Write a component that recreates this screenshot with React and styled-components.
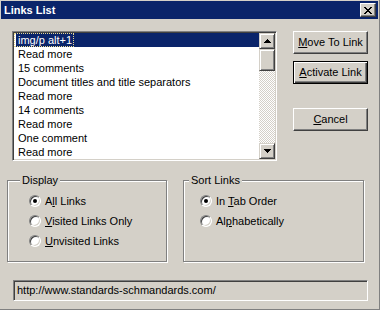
import React from "react"
import styled, { createGlobalStyle } from "styled-components"

const GlobalStyle = createGlobalStyle`
	html, body {
		margin: 0;
		padding: 0;
		background: #d4d0c8;
	}
	body {
		font-family: "Liberation Sans", Arial, sans-serif;
		font-size: 11px;
		color: #000;
	}
`

const Window = styled.div`
	width: 380px;
	height: 310px;
	box-sizing: border-box;
	padding: 1px 1px 0 1px;
	background: #d4d0c8;
	border-right: 1px solid #808080;
	border-bottom: 1px solid #808080;
	display: flex;
	flex-direction: column;
`

const TitleBar = styled.div`
	height: 18px;
	background: #0a246a;
	display: flex;
	align-items: center;
	justify-content: space-between;
	padding: 0 2px 0 3px;
`

const Title = styled.span`
	color: #fff;
	font-weight: bold;
	font-size: 11px;
	line-height: 18px;
`

const CloseButton = styled.div`
	width: 16px;
	height: 14px;
	box-sizing: border-box;
	background: #d4d0c8;
	border: 1px solid;
	border-color: #fff #404040 #404040 #fff;
	box-shadow: inset -1px -1px 0 #808080;
	display: flex;
	align-items: center;
	justify-content: center;

	svg {
		display: block;
	}
`

const Body = styled.div`
	display: flex;
	flex-direction: column;
`

const TopRow = styled.div`
	display: flex;
	align-items: flex-start;
	margin: 12px 0 0 11px;
`

const ListBox = styled.div`
	width: 265px;
	height: 130px;
	box-sizing: border-box;
	border: 1px solid;
	border-color: #808080 #fff #fff #808080;
	box-shadow: inset 1px 1px 0 #404040, inset -1px -1px 0 #d4d0c8;
	background: #fff;
	padding: 1px;
	display: flex;
`

const Items = styled.ul`
	flex: 1;
	list-style: none;
	margin: 0;
	padding: 0 0 0 2px;
	overflow: hidden;
`

const Item = styled.li`
	height: 14px;
	line-height: 14px;
	padding-left: 1px;
	background: ${(p) => (p.$selected ? "#0a246a" : "transparent")};
	color: ${(p) => (p.$selected ? "#fff" : "#000")};
	white-space: nowrap;
`

const ItemText = styled.span`
	display: inline-block;
	height: 14px;
	box-sizing: border-box;
	padding: 0 1px;
	border: 1px dotted ${(p) => (p.$focus ? "#e8d890" : "transparent")};
	line-height: 12px;
	margin-left: -3px;
	padding-left: 3px;
`

const ScrollBar = styled.div`
	width: 16px;
	display: flex;
	flex-direction: column;
`

const ScrollButton = styled.div`
	width: 16px;
	height: 16px;
	box-sizing: border-box;
	background: #d4d0c8;
	border: 1px solid;
	border-color: #d4d0c8 #404040 #404040 #d4d0c8;
	box-shadow: inset 1px 1px 0 #fff, inset -1px -1px 0 #808080;
	display: flex;
	align-items: center;
	justify-content: center;

	svg {
		display: block;
	}
`

const Thumb = styled(ScrollButton)`
	height: 22px;
`

const Track = styled.div`
	flex: 1;
	background: repeating-conic-gradient(#fff 0 25%, #d4d0c8 0 50%) 0 0 / 2px 2px;
`

const ButtonColumn = styled.div`
	display: flex;
	flex-direction: column;
	margin-left: 16px;
`

const Button = styled.div`
	width: 75px;
	height: 23px;
	box-sizing: border-box;
	margin-top: ${(p) => p.$gap || 0}px;
	background: #d4d0c8;
	border: 1px solid;
	border-color: ${(p) =>
		p.$default ? "#000" : "#fff #404040 #404040 #fff"};
	box-shadow: ${(p) =>
		p.$default
			? "inset 1px 1px 0 #fff, inset -1px -1px 0 #404040, inset -2px -2px 0 #808080"
			: "inset -1px -1px 0 #808080, inset 1px 1px 0 #d4d0c8"};
	display: flex;
	align-items: center;
	justify-content: center;
	line-height: 13px;
	padding-bottom: 1px;
`

const GroupRow = styled.div`
	display: flex;
	gap: 16px;
	margin: 13px 0 0 6px;
`

const Group = styled.fieldset`
	width: ${(p) => p.$width}px;
	height: 88px;
	box-sizing: border-box;
	margin: 0;
	padding: 0;
	border: 1px solid #808080;
	box-shadow: inset 1px 1px 0 #fff, 1px 1px 0 #fff;
	min-width: 0;
`

const Legend = styled.legend`
	margin-left: ${(p) => p.$offset}px;
	padding: 0 2px;
	line-height: 13px;
	background: #d4d0c8;
`

const RadioList = styled.div`
	display: flex;
	flex-direction: column;
	padding: 4px 0 0 ${(p) => p.$inset}px;
`

const RadioRow = styled.label`
	display: flex;
	align-items: center;
	height: 20px;
	gap: 4px;
`

const RadioCircle = styled.span`
	width: 12px;
	height: 12px;
	box-sizing: border-box;
	border-radius: 50%;
	border: 1px solid;
	border-color: #808080 #fff #fff #808080;
	box-shadow: inset 1px 1px 0 #404040, inset -1px -1px 0 #d4d0c8;
	background: #fff;
	display: flex;
	align-items: center;
	justify-content: center;

	&::after {
		content: "";
		width: 4px;
		height: 4px;
		border-radius: 50%;
		background: ${(p) => (p.$checked ? "#000" : "transparent")};
	}
`

const Status = styled.div`
	width: 355px;
	height: 21px;
	box-sizing: border-box;
	margin: 18px 0 0 12px;
	border: 1px solid;
	border-color: #808080 #fff #fff #808080;
	box-shadow: inset 1px 1px 0 #404040, inset -1px -1px 0 #d4d0c8;
	padding: 0 3px;
	display: flex;
	align-items: center;
	line-height: 13px;
`

const links = [
	"img/p alt+1",
	"Read more",
	"15 comments",
	"Document titles and title separators",
	"Read more",
	"14 comments",
	"Read more",
	"One comment",
	"Read more",
]

const Arrow = ({ up }) => (
	<svg width="7" height="4" viewBox="0 0 7 4" shapeRendering="crispEdges">
		<polygon
			points={up ? "3.5,0 7,4 0,4" : "0,0 7,0 3.5,4"}
			fill="#000"
		/>
	</svg>
)

const Radio = ({ checked, children }) => (
	<RadioRow>
		<RadioCircle $checked={checked} />
		<span>{children}</span>
	</RadioRow>
)

const App = () => {
	return (
		<>
			<GlobalStyle />
			<Window>
				<TitleBar>
					<Title>Links List</Title>
					<CloseButton>
						<svg width="8" height="7" viewBox="0 0 8 7" shapeRendering="crispEdges">
							<path d="M0.5 0 L7.5 7 M7.5 0 L0.5 7" stroke="#000" strokeWidth="1.6" />
						</svg>
					</CloseButton>
				</TitleBar>
				<Body>
					<TopRow>
						<ListBox>
							<Items>
								{links.map((text, i) => (
									<Item key={i} $selected={i === 0}>
										<ItemText $focus={i === 0}>{text}</ItemText>
									</Item>
								))}
							</Items>
							<ScrollBar>
								<ScrollButton>
									<Arrow up />
								</ScrollButton>
								<Thumb />
								<Track />
								<ScrollButton>
									<Arrow />
								</ScrollButton>
							</ScrollBar>
						</ListBox>
						<ButtonColumn>
							<Button>
								<span>
									<u>M</u>ove To Link
								</span>
							</Button>
							<Button $default $gap={7}>
								<span>
									<u>A</u>ctivate Link
								</span>
							</Button>
							<Button $gap={24}>
								<span>
									<u>C</u>ancel
								</span>
							</Button>
						</ButtonColumn>
					</TopRow>
					<GroupRow>
						<Group $width={160}>
							<Legend $offset={12}>Display</Legend>
							<RadioList $inset={21}>
								<Radio checked>
									A<u>l</u>l Links
								</Radio>
								<Radio>
									<u>V</u>isited Links Only
								</Radio>
								<Radio>
									<u>U</u>nvisited Links
								</Radio>
							</RadioList>
						</Group>
						<Group $width={181}>
							<Legend $offset={5}>Sort Links</Legend>
							<RadioList $inset={16}>
								<Radio checked>
									In <u>T</u>ab Order
								</Radio>
								<Radio>
									Al<u>p</u>habetically
								</Radio>
							</RadioList>
						</Group>
					</GroupRow>
					<Status>http://www.standards-schmandards.com/</Status>
				</Body>
			</Window>
		</>
	)
}

export default App
